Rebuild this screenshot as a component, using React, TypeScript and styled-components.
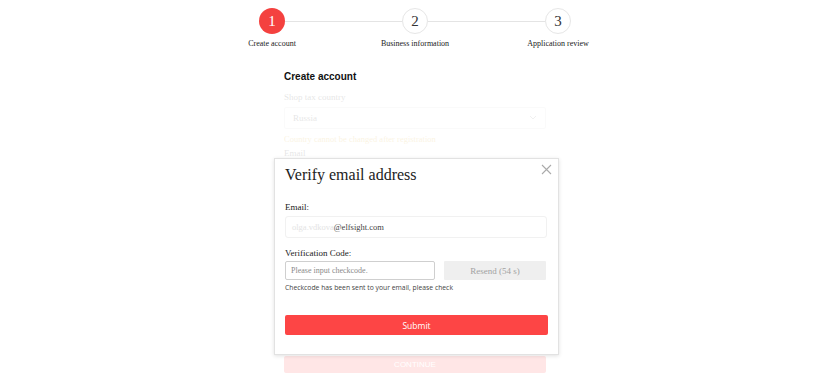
import React from 'react';
import styled, { createGlobalStyle } from 'styled-components';

const GlobalStyle = createGlobalStyle`
  html, body {
    margin: 0;
    padding: 0;
    background: #fff;
  }
  body {
    font-family: "Liberation Serif", "Times New Roman", serif;
    color: #222;
  }
`;

const Page = styled.div`
  position: relative;
  width: 830px;
  height: 391px;
  overflow: hidden;
  padding-top: 8px;
  box-sizing: border-box;
`;

const Stepper = styled.div`
  display: flex;
  align-items: flex-start;
  justify-content: center;
`;

const Step = styled.div`
  display: flex;
  flex-direction: column;
  align-items: center;
  width: 26px;
`;

const Circle = styled.div<{ $active?: boolean }>`
  width: 26px;
  height: 26px;
  box-sizing: border-box;
  border-radius: 50%;
  display: flex;
  align-items: center;
  justify-content: center;
  font-size: 15px;
  background: ${p => (p.$active ? '#f4413f' : '#fff')};
  color: ${p => (p.$active ? '#fff' : '#333')};
  border: ${p => (p.$active ? 'none' : '1.5px solid #e6e6e6')};
`;

const StepLabel = styled.div`
  margin-top: 5px;
  font-size: 8px;
  white-space: nowrap;
  color: #222;
`;

const Line = styled.div`
  width: 117px;
  height: 1px;
  background: #e4e4e4;
  margin-top: 13px;
`;

const Form = styled.div`
  width: 262px;
  margin: 23px auto 0;
  display: flex;
  flex-direction: column;
`;

const Heading = styled.h2`
  margin: 0;
  font-family: "Liberation Sans", Arial, sans-serif;
  font-size: 10px;
  font-weight: bold;
  color: #111;
`;

const Faded = styled.div`
  opacity: 0.12;
  display: flex;
  flex-direction: column;
`;

const FieldLabel = styled.div`
  font-size: 9px;
  color: #333;
  margin-top: 10px;
`;

const Select = styled.div`
  margin-top: 5px;
  height: 20px;
  border: 1px solid #ddd;
  border-radius: 2px;
  display: flex;
  align-items: center;
  justify-content: space-between;
  padding: 0 8px;
  font-size: 9px;
  color: #333;
`;

const Warn = styled.div`
  margin-top: 5px;
  font-size: 8.5px;
  color: #d9a300;
`;

const ContinueButton = styled.div`
  margin-top: 198px;
  height: 17px;
  border-radius: 2px;
  background: #ffe6e6;
  color: #fff;
  font-family: "Liberation Sans", Arial, sans-serif;
  font-size: 8px;
  display: flex;
  align-items: center;
  justify-content: center;
`;

const Modal = styled.div`
  position: absolute;
  left: 274px;
  top: 158px;
  width: 285px;
  height: 197px;
  box-sizing: border-box;
  background: #fff;
  border: 1px solid #e2e2e2;
  box-shadow: 0 1px 4px rgba(0, 0, 0, 0.12);
  padding: 7px 11px 0 10px;
  display: flex;
  flex-direction: column;
`;

const ModalTitle = styled.div`
  font-size: 16px;
  color: #222;
`;

const Close = styled.button`
  position: absolute;
  right: 6px;
  top: 4px;
  border: none;
  background: none;
  padding: 0;
  width: 12px;
  height: 12px;
  cursor: pointer;
`;

const ModalLabel = styled.div<{ $first?: boolean }>`
  font-size: 9px;
  color: #222;
  margin-top: ${p => (p.$first ? '18px' : '10px')};
`;

const EmailBox = styled.div`
  margin-top: 4px;
  height: 20px;
  border: 1px solid #f1f1f1;
  border-radius: 3px;
  display: flex;
  align-items: center;
  padding-left: 6px;
  font-size: 8.5px;
  color: #444;
`;

const Blurred = styled.span`
  color: #e4e4e4;
`;

const CodeRow = styled.div`
  margin-top: 3px;
  display: flex;
  gap: 9px;
  align-items: center;
`;

const CodeInput = styled.input`
  width: 150px;
  height: 19px;
  box-sizing: border-box;
  border: 1px solid #cfcfcf;
  border-radius: 2px;
  padding: 0 5px;
  font-family: "Liberation Serif", "Times New Roman", serif;
  font-size: 8px;
  outline: none;
  &::placeholder {
    color: #8a8a8a;
  }
`;

const ResendButton = styled.button`
  width: 102px;
  height: 19px;
  border: none;
  border-radius: 1px;
  background: #efefef;
  color: #a2a2a2;
  font-family: "Liberation Serif", "Times New Roman", serif;
  font-size: 9px;
  padding: 0;
`;

const Hint = styled.div`
  margin-top: 3px;
  font-family: "Open Sans", "Liberation Sans", sans-serif;
  font-size: 6.8px;
  color: #444;
`;

const SubmitButton = styled.button`
  margin-top: 23px;
  width: 263px;
  height: 20px;
  border: none;
  border-radius: 2px;
  background: #fd4545;
  color: #fff;
  font-family: "Open Sans", "Liberation Sans", sans-serif;
  font-size: 8.5px;
  padding: 0;
`;

const steps = ['Create account', 'Business information', 'Application review'];

export default function App() {
  return (
    <Page>
      <GlobalStyle />
      <Stepper>
        {steps.map((s, i) => (
          <React.Fragment key={s}>
            {i > 0 && <Line />}
            <Step>
              <Circle $active={i === 0}>{i + 1}</Circle>
              <StepLabel>{s}</StepLabel>
            </Step>
          </React.Fragment>
        ))}
      </Stepper>

      <Form>
        <Heading>Create account</Heading>
        <Faded>
          <FieldLabel>Shop tax country</FieldLabel>
          <Select>
            <span>Russia</span>
            <svg width="8" height="6" viewBox="0 0 8 6">
              <path d="M1 1l3 3 3-3" stroke="#888" fill="none" strokeWidth="1" />
            </svg>
          </Select>
          <Warn>Country cannot be changed after registration</Warn>
          <FieldLabel style={{ marginTop: 4 }}>Email</FieldLabel>
        </Faded>
        <ContinueButton>CONTINUE</ContinueButton>
      </Form>

      <Modal>
        <ModalTitle>Verify email address</ModalTitle>
        <Close aria-label="close">
          <svg width="11" height="11" viewBox="0 0 11 11">
            <path d="M1 1l9 9M10 1l-9 9" stroke="#aaa" strokeWidth="1.1" />
          </svg>
        </Close>
        <ModalLabel $first>Email:</ModalLabel>
        <EmailBox>
          <Blurred>olga.vdkova</Blurred>@elfsight.com
        </EmailBox>
        <ModalLabel>Verification Code:</ModalLabel>
        <CodeRow>
          <CodeInput placeholder="Please input checkcode." />
          <ResendButton>Resend (54 s)</ResendButton>
        </CodeRow>
        <Hint>Checkcode has been sent to your email, please check</Hint>
        <SubmitButton>Submit</SubmitButton>
      </Modal>
    </Page>
  );
}
